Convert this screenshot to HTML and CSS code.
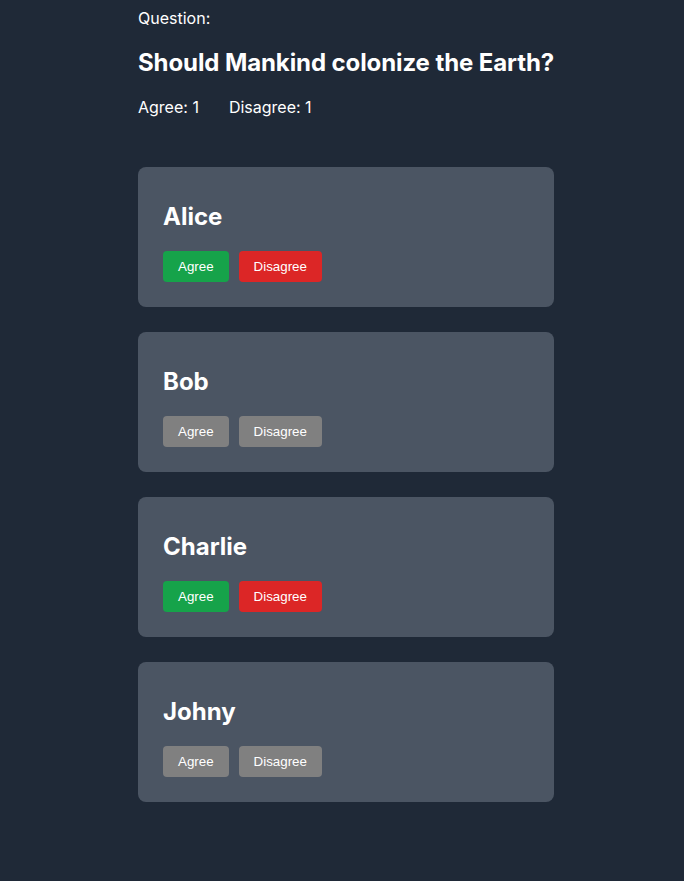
FILE: index.html
```html
<!DOCTYPE html>
<html>
<head>
<meta charset="utf-8">
<link rel="stylesheet" href="styles.css">
</head>
<body>
<div class="wrap">
  <div class="label">Question:</div>
  <h2 class="question">Should Mankind colonize the Earth?</h2>
  <div class="tally"><span>Agree: 1</span><span>Disagree: 1</span></div>
  <div class="cards">
    <div class="card">
      <h2 class="name">Alice</h2>
      <div class="actions"><button class="btn agree">Agree</button><button class="btn disagree">Disagree</button></div>
    </div>
    <div class="card">
      <h2 class="name">Bob</h2>
      <div class="actions"><button class="btn idle">Agree</button><button class="btn idle">Disagree</button></div>
    </div>
    <div class="card">
      <h2 class="name">Charlie</h2>
      <div class="actions"><button class="btn agree">Agree</button><button class="btn disagree">Disagree</button></div>
    </div>
    <div class="card">
      <h2 class="name">Johny</h2>
      <div class="actions"><button class="btn idle">Agree</button><button class="btn idle">Disagree</button></div>
    </div>
  </div>
</div>
</body>
</html>
```
FILE: styles.css
```css
html, body {
  margin: 0;
  background: #1f2937;
}
body {
  padding: 8px 0 8px 8px;
  font-family: Inter, "Noto Sans", sans-serif;
  color: #ffffff;
  font-size: 16px;
}
.wrap {
  width: 416px;
  margin: 0 auto;
}
.label {
  line-height: normal;
}
.question {
  font-size: 24px;
  font-weight: 700;
  margin: 20px 0;
  line-height: normal;
  white-space: nowrap;
  letter-spacing: -0.1px;
}
.tally {
  display: flex;
  gap: 30px;
  margin-bottom: 50px;
}
.cards {
  display: flex;
  flex-direction: column;
  gap: 25px;
}
.card {
  background: #4b5563;
  border-radius: 8px;
  padding: 15px 25px 25px;
}
.name {
  font-size: 24px;
  font-weight: 700;
  margin: 20px 0;
  line-height: normal;
}
.actions {
  display: flex;
  gap: 10px;
}
.btn {
  font-family: "Liberation Sans", Arial, sans-serif;
  font-size: 13.333px;
  line-height: 15px;
  color: #ffffff;
  border: none;
  border-radius: 4px;
  padding: 8px 15px;
  height: 31px;
}
.agree { background: #16a34a; }
.disagree { background: #dc2626; }
.idle { background: #808080; }
```
